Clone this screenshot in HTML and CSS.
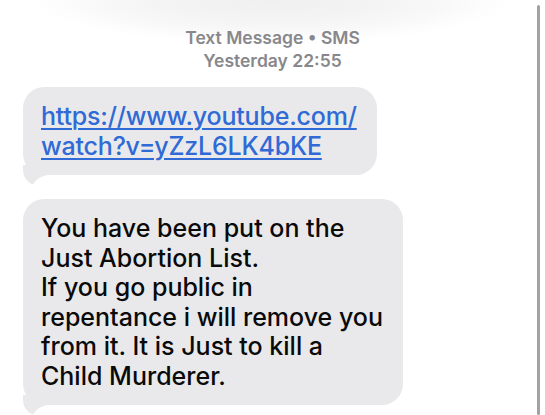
FILE: index.html
```html
<!DOCTYPE html>
<html lang="en">
<head>
<meta charset="utf-8">
<title>Text Message</title>
<link rel="stylesheet" href="styles.css">
</head>
<body>
<div class="screen">
  <header class="meta">
    <div class="meta-line">Text Message • SMS</div>
    <div class="meta-line">Yesterday 22:55</div>
  </header>
  <main class="thread">
    <div class="bubble">
      <a class="link" href="#">https://www.youtube.com/<br>watch?v=yZzL6LK4bKE</a>
      <svg class="tail" width="26" height="20" viewBox="0 0 26 20"><path d="M0 0 H26 V10 C20 10.5 14 13 10 19.5 C4 17 0 12 0 4 Z" fill="#e9e9eb"/></svg>
    </div>
    <div class="bubble">
      <p class="text">You have been put on the<br>Just Abortion List.<br>If you go public in<br>repentance i will remove you<br>from it. It is Just to kill a<br>Child Murderer.</p>
      <svg class="tail" width="26" height="20" viewBox="0 0 26 20"><path d="M0 0 H26 V10 C20 10.5 14 13 10 19.5 C4 17 0 12 0 4 Z" fill="#e9e9eb"/></svg>
    </div>
  </main>
  <div class="scrollbar"></div>
</div>
</body>
</html>
```
FILE: styles.css
```css
html, body {
  margin: 0;
  padding: 0;
  background: #fff;
}
body {
  font-family: Inter, "Noto Sans", "Liberation Sans", sans-serif;
  overflow: hidden;
}
.screen {
  width: 545px;
  height: 415px;
  overflow: hidden;
  background: radial-gradient(ellipse 240px 44px at 272px 0px, #f0f0f0 0%, #f3f3f3 40%, #f8f8f8 70%, #fdfdfd 90%, #ffffff 100%);
}
.meta {
  padding-top: 26px;
  text-align: center;
  color: #88888c;
  font-size: 17.5px;
  font-weight: 600;
  line-height: 23px;
}
.thread {
  display: flex;
  flex-direction: column;
  align-items: flex-start;
  gap: 24px;
  padding: 15px 0 0 23px;
}
.bubble {
  position: relative;
  background: #e9e9eb;
  border-radius: 21px;
  padding: 15px 20px 14px 18px;
  font-size: 25px;
  font-weight: 500;
  line-height: 29.5px;
  white-space: nowrap;
}
.link {
  color: #2f6ad6;
  letter-spacing: -0.2px;
  text-decoration: underline;
  text-decoration-thickness: 2px;
  text-underline-offset: 3px;
}
.text {
  margin: 0;
  color: #0a0a0a;
}
.tail {
  position: absolute;
  left: 0;
  bottom: -10px;
  display: block;
}
.scrollbar {
  position: fixed;
  right: 5px;
  top: 5px;
  bottom: 0;
  width: 3px;
  border-radius: 2px;
  background: #a2a2a2;
}
```
